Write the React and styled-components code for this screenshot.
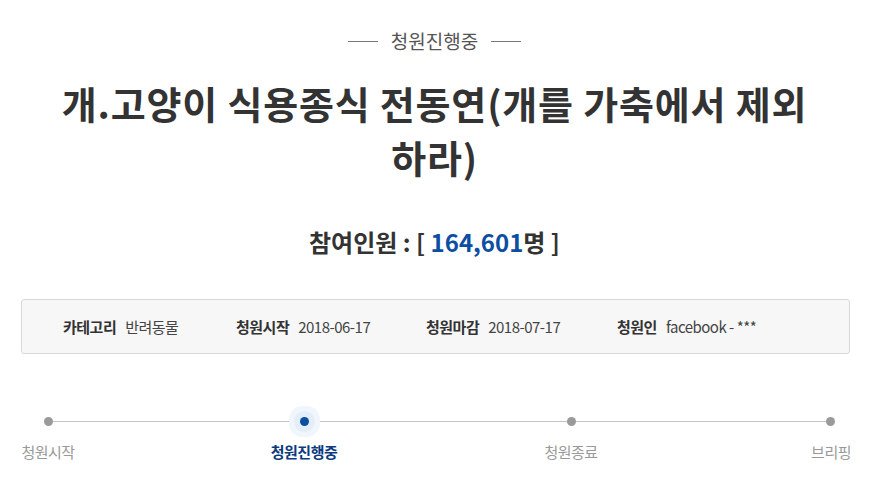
import React from "react";
import styled, { createGlobalStyle } from "styled-components";

const Global = createGlobalStyle`
  html, body { margin: 0; padding: 0; background: #fff; }
  body { font-family: "Noto Sans CJK KR", "Noto Sans", sans-serif; color: #333; }
`;

const Page = styled.div`
  width: 869px;
  padding: 28px 0 0;
  box-sizing: border-box;
`;

const Status = styled.div`
  display: flex;
  justify-content: center;
  align-items: center;
  gap: 13px;
  font-size: 19px;
  line-height: 26px;
  color: #555;
  &::before, &::after {
    content: "";
    width: 30px;
    height: 1px;
    background: #777;
  }
`;

const Headline = styled.h1`
  margin: 22px auto 0;
  width: 760px;
  text-align: center;
  font-size: 38px;
  letter-spacing: 0.8px;
  line-height: 54px;
  font-weight: 700;
  color: #333;
`;

const Count = styled.div`
  margin-top: 43px;
  text-align: center;
  font-size: 24px;
  line-height: 30px;
  font-weight: 700;
  color: #333;
`;

const Num = styled.span`
  color: #0b4ea2;
`;

const InfoBox = styled.ul`
  list-style: none;
  margin: 42px 19px 0 21px;
  padding: 0 0 0 41px;
  height: 55px;
  display: flex;
  align-items: center;
  background: #f7f7f7;
  border: 1px solid #d9d9d9;
  border-radius: 3px;
  box-sizing: border-box;
`;

const Info = styled.li`
  display: flex;
  align-items: center;
  gap: 9px;
  width: ${p => p.$w}px;
  font-size: 15px;
  line-height: 20px;
  color: #444;
  letter-spacing: -0.5px;
`;

const Label = styled.strong`
  font-weight: 700;
  color: #333;
`;

const Steps = styled.div`
  position: relative;
  margin: 57px 18px 0 21px;
  display: grid;
  grid-template-columns: 54px 458px 76px 1fr;
  &::before {
    content: "";
    position: absolute;
    top: 10px;
    left: 26px;
    right: 21px;
    height: 1px;
    background: #c4c4c4;
  }
`;

const Step = styled.div`
  position: relative;
  display: flex;
  flex-direction: column;
  align-items: ${p => (p.$end ? "flex-end" : "center")};
`;

const DotWrap = styled.div`
  width: 42px;
  height: 21px;
  display: flex;
  align-items: center;
  justify-content: center;
`;

const Dot = styled.span`
  width: 9px;
  height: 9px;
  border-radius: 50%;
  background: ${p => (p.$active ? "#0b4ea2" : "#9a9a9a")};
  box-shadow: ${p =>
    p.$active ? "0 0 0 6px #e4eefa, 0 0 0 11px #f1f6fd" : "none"};
`;

const StepLabel = styled.span`
  margin-top: 9px;
  white-space: nowrap;
  font-size: 15px;
  line-height: 22px;
  letter-spacing: -0.5px;
  color: ${p => (p.$active ? "#0b3a7e" : "#999")};
  font-weight: ${p => (p.$active ? 700 : 400)};
`;

const steps = [
  { name: "청원시작" },
  { name: "청원진행중", active: true },
  { name: "청원종료" },
  { name: "브리핑", end: true },
];

export default function App() {
  return (
    <Page>
      <Global />
      <Status>청원진행중</Status>
      <Headline>개.고양이 식용종식 전동연(개를 가축에서 제외하라)</Headline>
      <Count>
        참여인원 : [ <Num>164,601</Num>명 ]
      </Count>
      <InfoBox>
        <Info $w={173}><Label>카테고리</Label>반려동물</Info>
        <Info $w={190}><Label>청원시작</Label>2018-06-17</Info>
        <Info $w={191}><Label>청원마감</Label>2018-07-17</Info>
        <Info $w={200}><Label>청원인</Label>facebook - ***</Info>
      </InfoBox>
      <Steps>
        {steps.map(s => (
          <Step key={s.name} $end={s.end}>
            <DotWrap>
              <Dot $active={s.active} />
            </DotWrap>
            <StepLabel $active={s.active}>{s.name}</StepLabel>
          </Step>
        ))}
      </Steps>
    </Page>
  );
}
